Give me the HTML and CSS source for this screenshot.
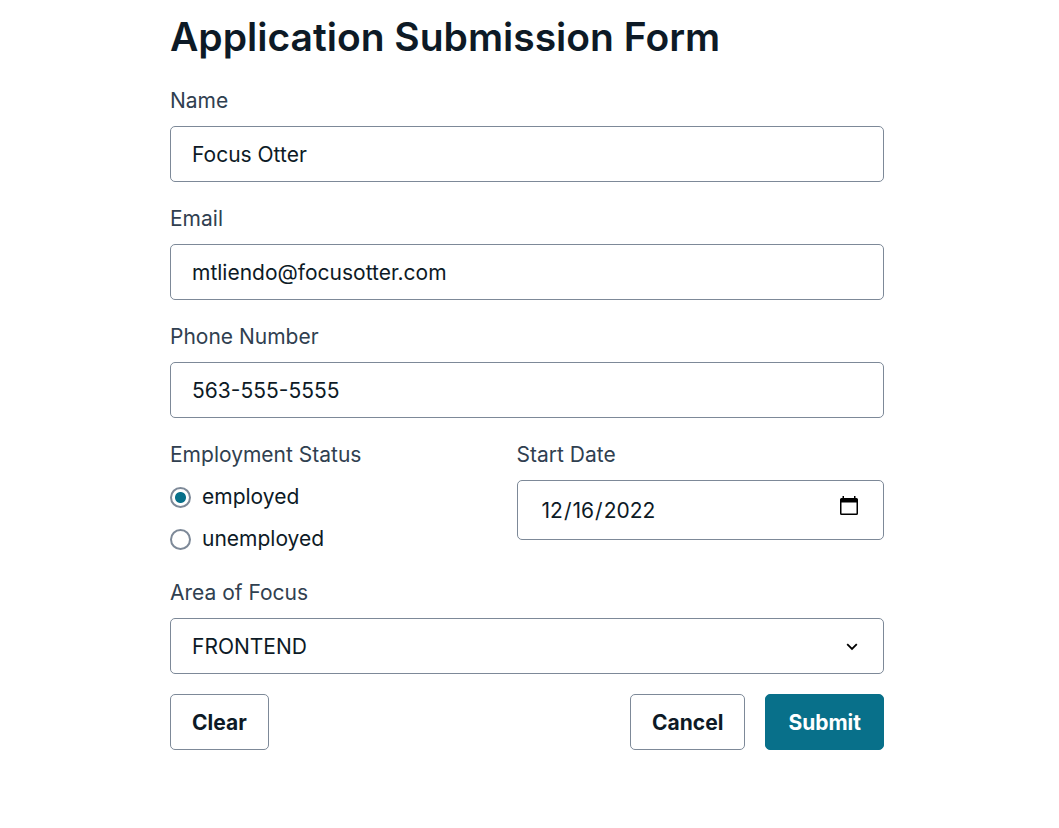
FILE: index.html
```html
<!DOCTYPE html>
<html lang="en-US">
<head>
<meta charset="utf-8">
<meta name="viewport" content="width=device-width, initial-scale=1">
<title>Application Submission Form</title>
<link rel="stylesheet" href="styles.css">
</head>
<body>
<main class="page">
  <h1 class="title">Application Submission Form</h1>
  <form class="form">
    <div class="field">
      <label class="label" for="name">Name</label>
      <input class="control" id="name" type="text" value="Focus Otter">
    </div>
    <div class="field">
      <label class="label" for="email">Email</label>
      <input class="control" id="email" type="email" value="mtliendo@focusotter.com">
    </div>
    <div class="field">
      <label class="label" for="phone">Phone Number</label>
      <input class="control" id="phone" type="tel" value="563-555-5555">
    </div>
    <div class="row">
      <div class="field" role="radiogroup" aria-labelledby="status-label">
        <span class="label" id="status-label">Employment Status</span>
        <div class="radios">
          <label class="radio"><input class="radio-input" type="radio" name="status" value="employed" checked>employed</label>
          <label class="radio"><input class="radio-input" type="radio" name="status" value="unemployed">unemployed</label>
        </div>
      </div>
      <div class="field">
        <label class="label" for="start">Start Date</label>
        <div class="wrap">
          <input class="control control-date" id="start" type="date" value="2022-12-16">
          <svg class="icon icon-calendar" viewBox="0 0 18 20" aria-hidden="true"><path fill="#000" fill-rule="evenodd" d="M2.500 0h1.500v2h10V0h1.500v2h1A1.500 1.500 0 0 1 18 3.500v14a1.500 1.500 0 0 1-1.500 1.500h-15A1.500 1.500 0 0 1 0 17.500v-14A1.500 1.500 0 0 1 1.500 2h1zM1.500 6.500v11h15v-11z"/></svg>
        </div>
      </div>
    </div>
    <div class="field">
      <label class="label" for="focus">Area of Focus</label>
      <div class="wrap">
        <select class="control control-select" id="focus"><option>FRONTEND</option></select>
        <svg class="icon icon-chevron" viewBox="0 0 12 8" aria-hidden="true"><path fill="none" stroke="#000" stroke-width="1.800" d="M1.200 1.200 6 6l4.800-4.800"/></svg>
      </div>
    </div>
    <div class="actions">
      <button class="button" type="reset">Clear</button>
      <div class="actions-end">
        <button class="button" type="button">Cancel</button>
        <button class="button button-primary" type="submit">Submit</button>
      </div>
    </div>
  </form>
</main>
</body>
</html>
```
FILE: styles.css
```css
* { box-sizing: border-box; }

body {
  margin: 0;
  background: #fff;
  color: #0d1a26;
  font-family: Inter, "Liberation Sans", sans-serif;
  font-size: 21px;
  line-height: 32px;
}

.page { padding: 10px 175px 40px 170px; }

.title {
  margin: 0 0 20px;
  font-size: 39px;
  font-weight: 600;
  line-height: 54px;
}

.form, .field { display: flex; flex-direction: column; }
.form { gap: 20px; }
.field { gap: 8px; min-width: 0; }
.label { color: #304050; line-height: 34px; }

.control {
  display: block;
  width: 100%;
  height: 56px;
  margin: 0;
  padding: 0 21px;
  border: 1px solid #7d8998;
  border-radius: 5px;
  background: #fff;
  color: #0d1a26;
  font: inherit;
  appearance: none;
}
.control-select { padding-top: 2px; }

.row {
  display: grid;
  grid-template-columns: 8fr 9fr;
  gap: 20px;
}

.radios { display: flex; flex-direction: column; gap: 8px; }
.radio { display: flex; align-items: center; gap: 11px; line-height: 34px; }

.radio-input {
  appearance: none;
  width: 21px;
  height: 21px;
  margin: 0;
  border: 2px solid #7d8998;
  border-radius: 50%;
  background: #fff;
}
.radio-input:checked {
  background: radial-gradient(circle, #08708a 5px, #fff 6px);
}

.wrap { position: relative; }
.control-date { height: 60px; padding: 1px 23px 0; }
.control-date::-webkit-calendar-picker-indicator { opacity: 0; }

.icon { position: absolute; pointer-events: none; }
.icon-calendar { top: 16px; right: 26px; width: 18px; height: 20px; }
.icon-chevron { top: 25px; right: 26px; width: 12px; height: 8px; }

.actions, .actions-end { display: flex; gap: 20px; }
.actions { justify-content: space-between; }

.button {
  height: 56px;
  padding: 2px 21px 0;
  border: 1px solid #7d8998;
  border-radius: 5px;
  background: #fff;
  color: #0d1a26;
  font: inherit;
  font-weight: 700;
}
.button-primary { padding: 2px 22px 0; border-color: #08708a; background: #08708a; color: #fff; }
```
